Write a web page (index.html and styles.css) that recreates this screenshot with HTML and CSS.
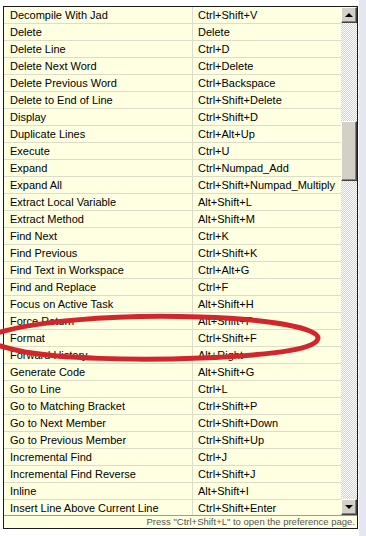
FILE: index.html
```html
<!DOCTYPE html>
<html lang="en">
<head>
  <meta charset="UTF-8">
  <meta name="viewport" content="width=device-width, initial-scale=1.0">
  <link rel="stylesheet" href="styles.css">
  <title>Key Assist</title>
</head>
<body>
  <div class="popup">
    <div class="body">
      <div class="list">
        <div class="row"><span class="cmd">Decompile With Jad</span><span class="key">Ctrl+Shift+V</span></div>
        <div class="row"><span class="cmd">Delete</span><span class="key">Delete</span></div>
        <div class="row"><span class="cmd">Delete Line</span><span class="key">Ctrl+D</span></div>
        <div class="row"><span class="cmd">Delete Next Word</span><span class="key">Ctrl+Delete</span></div>
        <div class="row"><span class="cmd">Delete Previous Word</span><span class="key">Ctrl+Backspace</span></div>
        <div class="row"><span class="cmd">Delete to End of Line</span><span class="key">Ctrl+Shift+Delete</span></div>
        <div class="row"><span class="cmd">Display</span><span class="key">Ctrl+Shift+D</span></div>
        <div class="row"><span class="cmd">Duplicate Lines</span><span class="key">Ctrl+Alt+Up</span></div>
        <div class="row"><span class="cmd">Execute</span><span class="key">Ctrl+U</span></div>
        <div class="row"><span class="cmd">Expand</span><span class="key">Ctrl+Numpad_Add</span></div>
        <div class="row"><span class="cmd">Expand All</span><span class="key">Ctrl+Shift+Numpad_Multiply</span></div>
        <div class="row"><span class="cmd">Extract Local Variable</span><span class="key">Alt+Shift+L</span></div>
        <div class="row"><span class="cmd">Extract Method</span><span class="key">Alt+Shift+M</span></div>
        <div class="row"><span class="cmd">Find Next</span><span class="key">Ctrl+K</span></div>
        <div class="row"><span class="cmd">Find Previous</span><span class="key">Ctrl+Shift+K</span></div>
        <div class="row"><span class="cmd">Find Text in Workspace</span><span class="key">Ctrl+Alt+G</span></div>
        <div class="row"><span class="cmd">Find and Replace</span><span class="key">Ctrl+F</span></div>
        <div class="row"><span class="cmd">Focus on Active Task</span><span class="key">Alt+Shift+H</span></div>
        <div class="row"><span class="cmd">Force Return</span><span class="key">Alt+Shift+F</span></div>
        <div class="row"><span class="cmd">Format</span><span class="key">Ctrl+Shift+F</span></div>
        <div class="row"><span class="cmd">Forward History</span><span class="key">Alt+Right</span></div>
        <div class="row"><span class="cmd">Generate Code</span><span class="key">Alt+Shift+G</span></div>
        <div class="row"><span class="cmd">Go to Line</span><span class="key">Ctrl+L</span></div>
        <div class="row"><span class="cmd">Go to Matching Bracket</span><span class="key">Ctrl+Shift+P</span></div>
        <div class="row"><span class="cmd">Go to Next Member</span><span class="key">Ctrl+Shift+Down</span></div>
        <div class="row"><span class="cmd">Go to Previous Member</span><span class="key">Ctrl+Shift+Up</span></div>
        <div class="row"><span class="cmd">Incremental Find</span><span class="key">Ctrl+J</span></div>
        <div class="row"><span class="cmd">Incremental Find Reverse</span><span class="key">Ctrl+Shift+J</span></div>
        <div class="row"><span class="cmd">Inline</span><span class="key">Alt+Shift+I</span></div>
        <div class="row"><span class="cmd">Insert Line Above Current Line</span><span class="key">Ctrl+Shift+Enter</span></div>
      </div>
      <div class="scrollbar">
        <div class="btn"><span class="arrow up"></span></div>
        <div class="track">
          <div class="thumb"></div>
        </div>
        <div class="btn"><span class="arrow down"></span></div>
      </div>
    </div>
    <div class="status">Press "Ctrl+Shift+L" to open the preference page.</div>
  </div>

  <!-- red marker around the Format row -->
  <svg class="marker" width="366" height="536" viewBox="0 0 366 536">
    <path d="M -6 334 C 30 322, 110 314, 200 317 C 270 319, 318 328, 318 338 C 318 348, 280 355, 200 358 C 130 361, 60 358, 25 352 C 10 349, 0 346, -6 344"
          fill="none" stroke="#d3262c" stroke-width="5" stroke-linecap="round"/>
  </svg>
</body>
</html>
```

FILE: styles.css
```css
body {
  margin: 0;
  background: linear-gradient(to right, #ffffff 359px, #e4e6f2 359px);
  font-family: 'Liberation Sans', Arial, sans-serif;
  height: 536px;
  overflow: hidden;
}

.popup {
  position: relative;
  margin: 6px 0 0 3px;
  width: 353px;
  border: 1px solid #1a1a1a;
  background-color: #ffffe1;
}

.body {
  display: flex;
  height: 508px;
}

.list {
  flex: 1;
  overflow: hidden;
}

.row {
  display: flex;
  height: 16px;
  border-bottom: 1px solid #dcdcc8;
  font-size: 11px;
  line-height: 16px;
  color: #000;
}

.cmd {
  width: 182px;
  padding-left: 6px;
  border-right: 1px solid #dcdcc8;
  white-space: nowrap;
  overflow: hidden;
}

.key {
  padding-left: 5px;
  white-space: nowrap;
}

.scrollbar {
  width: 16px;
  display: flex;
  flex-direction: column;
}

.btn,
.thumb {
  background-color: #d4d0c8;
  border-top: 1px solid #ffffff;
  border-left: 1px solid #ffffff;
  border-right: 1px solid #404040;
  border-bottom: 1px solid #404040;
  box-shadow: inset -1px -1px 0 #808080;
  box-sizing: border-box;
}

.btn {
  height: 16px;
  display: flex;
  align-items: center;
  justify-content: center;
}

.arrow {
  width: 0;
  height: 0;
  border-left: 4px solid transparent;
  border-right: 4px solid transparent;
}

.arrow.up {
  border-bottom: 4px solid #000;
}

.arrow.down {
  border-top: 4px solid #000;
}

.track {
  flex: 1;
  background-color: #ffffff;
  background-image: conic-gradient(#d4d0c8 25%, #ffffff 0 50%, #d4d0c8 0 75%, #ffffff 0);
  background-size: 2px 2px;
  padding-top: 98px;
}

.thumb {
  height: 60px;
}

.status {
  height: 12px;
  border-top: 1px solid #9c9c90;
  font-size: 9.5px;
  line-height: 12px;
  color: #555555;
  text-align: right;
  padding-right: 2px;
  white-space: nowrap;
}

.marker {
  position: absolute;
  left: 0;
  top: 0;
  pointer-events: none;
}
```
